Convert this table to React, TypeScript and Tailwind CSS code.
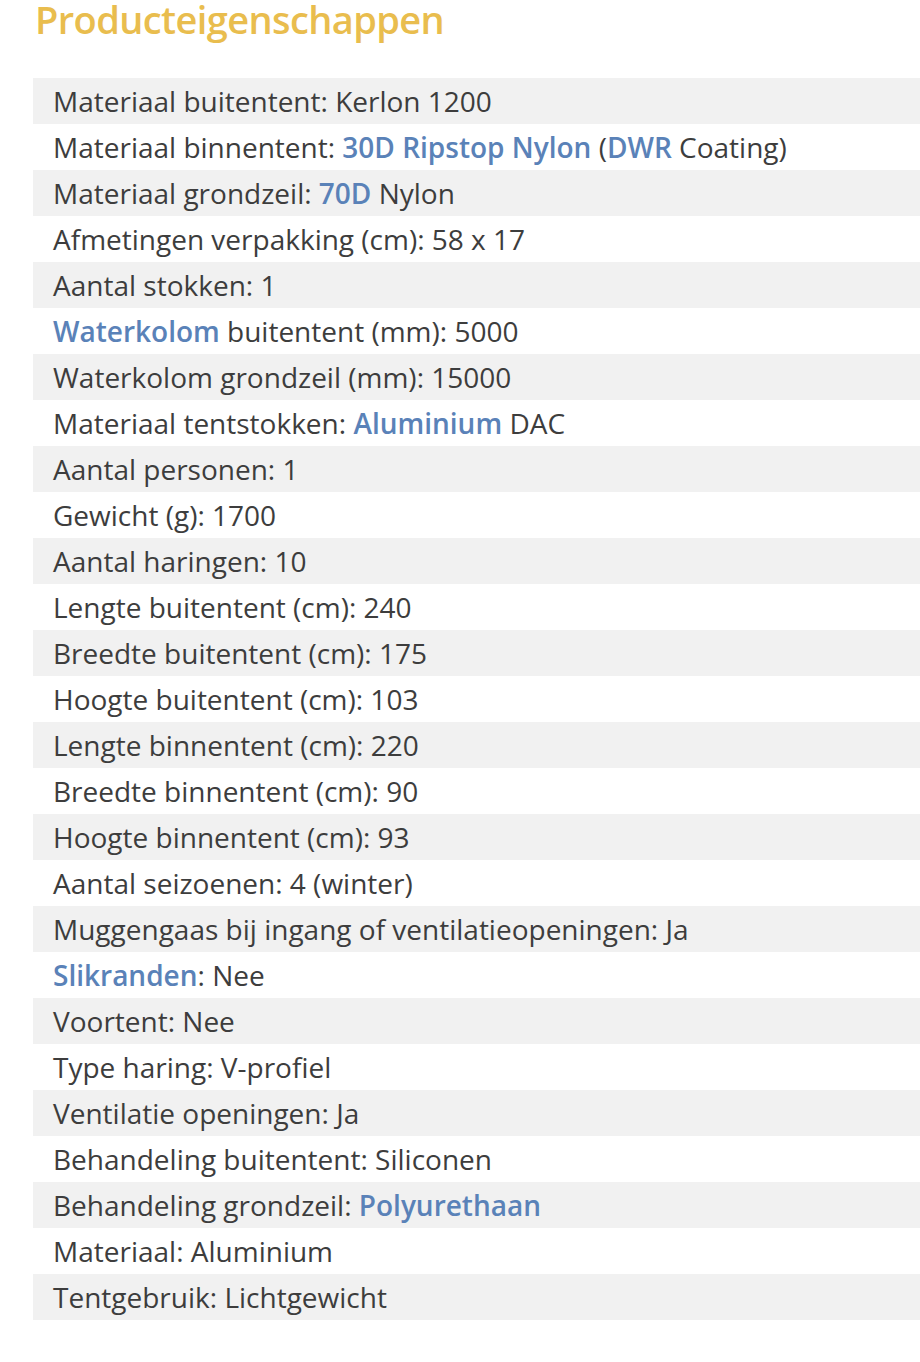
const link = "font-semibold text-[#5a82b8]";

type Part = string | { l: string };

const rows: Part[][] = [
  ["Materiaal buitentent: Kerlon 1200"],
  ["Materiaal binnentent: ", { l: "30D Ripstop Nylon" }, " (", { l: "DWR" }, " Coating)"],
  ["Materiaal grondzeil: ", { l: "70D" }, " Nylon"],
  ["Afmetingen verpakking (cm): 58 x 17"],
  ["Aantal stokken: 1"],
  [{ l: "Waterkolom" }, " buitentent (mm): 5000"],
  ["Waterkolom grondzeil (mm): 15000"],
  ["Materiaal tentstokken: ", { l: "Aluminium" }, " DAC"],
  ["Aantal personen: 1"],
  ["Gewicht (g): 1700"],
  ["Aantal haringen: 10"],
  ["Lengte buitentent (cm): 240"],
  ["Breedte buitentent (cm): 175"],
  ["Hoogte buitentent (cm): 103"],
  ["Lengte binnentent (cm): 220"],
  ["Breedte binnentent (cm): 90"],
  ["Hoogte binnentent (cm): 93"],
  ["Aantal seizoenen: 4 (winter)"],
  ["Muggengaas bij ingang of ventilatieopeningen: Ja"],
  [{ l: "Slikranden" }, ": Nee"],
  ["Voortent: Nee"],
  ["Type haring: V-profiel"],
  ["Ventilatie openingen: Ja"],
  ["Behandeling buitentent: Siliconen"],
  ["Behandeling grondzeil: ", { l: "Polyurethaan" }],
  ["Materiaal: Aluminium"],
  ["Tentgebruik: Lichtgewicht"],
];

export default function App() {
  return (
    <div className="min-h-[1362px] bg-white pl-[33px] font-['Open_Sans',sans-serif]">
      <h2 className="pl-[2px] text-[38px] leading-[38px] font-semibold tracking-[-0.6px] text-[#e9bd4e]">
        Producteigenschappen
      </h2>
      <ul className="mt-[40px]">
        {rows.map((parts, i) => (
          <li
            key={i}
            className={`h-[46px] pl-5 text-[28px] leading-[46px] text-[#3d3d3d] ${i % 2 === 0 ? "bg-[#f1f1f1]" : "bg-white"}`}
          >
            {parts.map((p, j) =>
              typeof p === "string" ? (
                <span key={j}>{p}</span>
              ) : (
                <a key={j} className={link}>
                  {p.l}
                </a>
              )
            )}
          </li>
        ))}
      </ul>
    </div>
  );
}
